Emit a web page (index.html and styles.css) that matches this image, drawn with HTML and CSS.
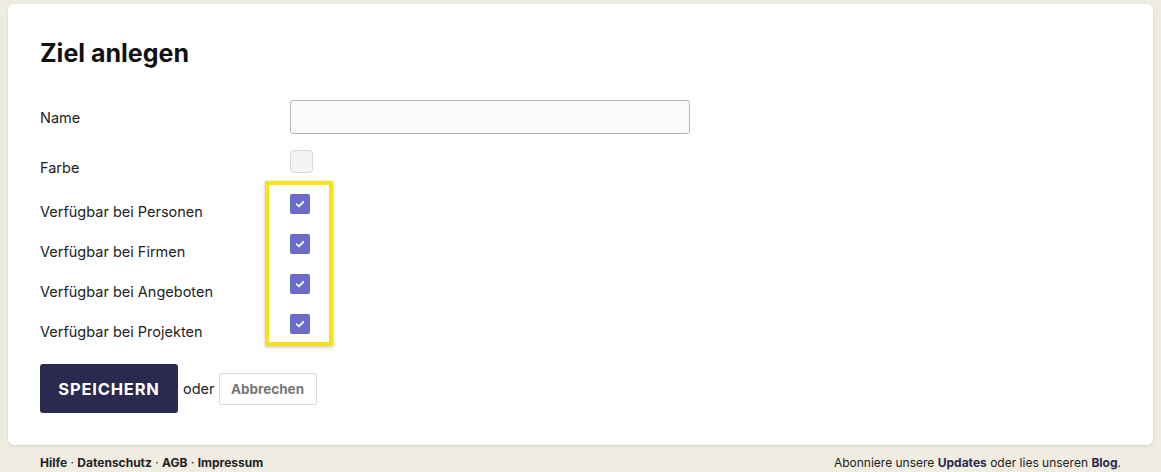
FILE: index.html
```html
<!DOCTYPE html>
<html lang="de">
<head>
<meta charset="utf-8">
<title>Ziel anlegen</title>
<link rel="stylesheet" href="styles.css">
</head>
<body>
<main class="card">
  <h1 class="title">Ziel anlegen</h1>
  <form class="form">
    <div class="row row-name">
      <label class="label">Name</label>
      <div class="field"><input class="text-input" type="text"></div>
    </div>
    <div class="row row-color">
      <label class="label">Farbe</label>
      <div class="field"><span class="color-box"></span></div>
    </div>
    <div class="row row-check">
      <label class="label">Verfügbar bei Personen</label>
      <div class="field"><span class="check"><svg viewBox="0 0 20 20" width="20" height="20"><path d="M6.6 10.2 L8.9 12.4 L13.4 7.8" fill="none" stroke="#fff" stroke-width="1.8" stroke-linecap="round" stroke-linejoin="round"/></svg></span></div>
    </div>
    <div class="row row-check">
      <label class="label">Verfügbar bei Firmen</label>
      <div class="field"><span class="check"><svg viewBox="0 0 20 20" width="20" height="20"><path d="M6.6 10.2 L8.9 12.4 L13.4 7.8" fill="none" stroke="#fff" stroke-width="1.8" stroke-linecap="round" stroke-linejoin="round"/></svg></span></div>
    </div>
    <div class="row row-check">
      <label class="label">Verfügbar bei Angeboten</label>
      <div class="field"><span class="check"><svg viewBox="0 0 20 20" width="20" height="20"><path d="M6.6 10.2 L8.9 12.4 L13.4 7.8" fill="none" stroke="#fff" stroke-width="1.8" stroke-linecap="round" stroke-linejoin="round"/></svg></span></div>
    </div>
    <div class="row row-check">
      <label class="label">Verfügbar bei Projekten</label>
      <div class="field"><span class="check"><svg viewBox="0 0 20 20" width="20" height="20"><path d="M6.6 10.2 L8.9 12.4 L13.4 7.8" fill="none" stroke="#fff" stroke-width="1.8" stroke-linecap="round" stroke-linejoin="round"/></svg></span></div>
    </div>
    <div class="actions">
      <button type="button" class="btn-primary">SPEICHERN</button>
      <span class="oder">oder</span>
      <button type="button" class="btn-cancel">Abbrechen</button>
    </div>
  </form>
  <div class="highlight"></div>
</main>
<footer class="footer">
  <div class="footer-left"><a>Hilfe</a> · <a>Datenschutz</a> · <a>AGB</a> · <a>Impressum</a></div>
  <div class="footer-right">Abonniere unsere <a>Updates</a> oder lies unseren <a>Blog</a>.</div>
</footer>
</body>
</html>
```
FILE: styles.css
```css
* { box-sizing: border-box; }
html, body { margin: 0; padding: 0; }
body {
  background: #efece2;
  font-family: "Inter", "Lato", sans-serif;
  color: #222;
  padding: 4px 8px 0 8px;
}
.card {
  position: relative;
  background: #fff;
  border-radius: 6px;
  box-shadow: 0 1px 3px rgba(0,0,0,0.12);
  padding: 32px 32px 32px 32px;
  height: 441px;
}
.title {
  margin: 2px 0 0 0;
  font-size: 25px;
  line-height: 30px;
  font-weight: 700;
  color: #111;
}
.form { margin-top: 32px; }
.row {
  display: grid;
  grid-template-columns: 250px 1fr;
  align-items: start;
}
.label {
  font-size: 14.5px;
  line-height: 20px;
  padding-top: 8px;
  color: #222;
}
.row-name { height: 50px; }
.row-color { height: 40px; }
.row-check { height: 40px; }
.row-check .label { padding-top: 12px; }
.text-input {
  display: block;
  width: 400px;
  height: 34px;
  border: 1px solid #b5b5b5;
  border-radius: 3px;
  background: #fafafa;
  margin: 0;
  padding: 0 8px;
  font: inherit;
}
.color-box {
  display: block;
  width: 23px;
  height: 23px;
  border: 1px solid #d8d8d8;
  border-radius: 4px;
  background: #f4f4f4;
}
.check {
  display: block;
  width: 20px;
  height: 20px;
  margin-top: 4px;
  background: #6a6ec8;
  border-radius: 2px;
}
.check svg { display: block; }
.actions {
  margin-top: 14px;
  display: flex;
  align-items: center;
}
.btn-primary {
  width: 138px;
  height: 49px;
  background: #2a2950;
  color: #fff;
  border: 0;
  border-radius: 3px;
  font-family: inherit;
  font-size: 16.5px;
  font-weight: 700;
  letter-spacing: 0.8px;
  padding: 0;
}
.oder {
  font-size: 14.5px;
  margin: 0 4px 0 5px;
  color: #222;
}
.btn-cancel {
  width: 98px;
  height: 32px;
  background: #fff;
  border: 1px solid #dcdcdc;
  border-radius: 2px;
  color: #777;
  font-family: inherit;
  font-size: 13.5px;
  font-weight: 700;
  padding: 0;
}
.highlight {
  position: absolute;
  left: 257px;
  top: 177px;
  width: 68px;
  height: 165px;
  border: 4px solid #f7e11a;
  box-shadow: 0 1px 3px rgba(0,0,0,0.25);
}
.footer {
  display: flex;
  justify-content: space-between;
  padding: 10px 32px 0 32px;
  font-size: 12px;
  line-height: 16px;
  color: #222;
}
.footer a { font-weight: 700; }
.footer-left a { color: #222; }
.footer-right a { color: #2a2950; }
```
